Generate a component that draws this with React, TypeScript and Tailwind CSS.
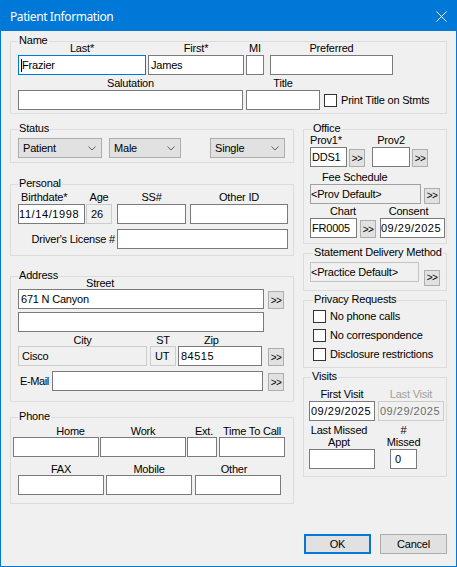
import React from "react";

type TBProps = { cls?: string; v?: string; kind?: "n" | "f" | "ro" | "sd" | "sl"; caret?: boolean; txt?: string };

function TB({ cls = "w-full", v = "", kind = "n", caret = false, txt = "pl-[2px]" }: TBProps) {
  const k =
    kind === "ro"
      ? "bg-[#f0f0f0] border-[#cccccc]"
      : kind === "f"
      ? "bg-white border-[#0078d7]"
      : kind === "sd"
      ? "bg-[#f0f0f0] border-[#a0a0a0]"
      : kind === "sl"
      ? "bg-[#f0f0f0] border-[#c4c4c4]"
      : "bg-white border-[#7a7a7a]";
  return (
    <div className={`h-[20px] shrink-0 border ${k} flex items-center overflow-hidden whitespace-nowrap ${txt} ${cls}`}>
      {caret && <span className="w-px h-[13px] bg-black shrink-0" />}
      {v}
    </div>
  );
}

function Field({ cls, label, lcls = "text-center", children }: { cls: string; label: React.ReactNode; lcls?: string; children: React.ReactNode }) {
  return (
    <div className={`flex flex-col shrink-0 ${cls}`}>
      <div className={`h-[13px] leading-[13px] whitespace-nowrap ${lcls}`}>{label}</div>
      {children}
    </div>
  );
}

function Btn({ cls = "", h = "h-[18px]" }: { cls?: string; h?: string }) {
  return (
    <div className={`w-[16px] ${h} shrink-0 bg-[#e1e1e1] border border-[#adadad] flex justify-center items-end pb-[2px] text-[10px] leading-[10px] tracking-[-0.5px] ${cls}`}>
      &gt;&gt;
    </div>
  );
}

function Sel({ cls, v }: { cls: string; v: string }) {
  return (
    <div className={`h-[20px] shrink-0 border border-[#adadad] bg-[#e1e1e1] flex items-center pl-[4px] pr-[5px] ${cls}`}>
      <span className="flex-1">{v}</span>
      <svg width="8" height="5" viewBox="0 0 8 5">
        <path d="M0.5 0.5L4 4L7.5 0.5" fill="none" stroke="#606060" strokeWidth="1" />
      </svg>
    </div>
  );
}

function Group({ title, cls = "", left = "left-[7px]", children }: { title: string; cls?: string; left?: string; children: React.ReactNode }) {
  return (
    <div className={`relative border border-[#dcdcdc] ${cls}`}>
      <span className={`absolute -top-[8px] ${left} px-[1px] bg-[#f0f0f0] leading-[13px] whitespace-nowrap`}>{title}</span>
      {children}
    </div>
  );
}

function Check({ label, cls = "" }: { label: string; cls?: string }) {
  return (
    <div className={`flex items-center ${cls}`}>
      <div className="w-[13px] h-[13px] border border-[#333333] bg-white shrink-0" />
      <span className="ml-[4px] whitespace-nowrap">{label}</span>
    </div>
  );
}

export default function App() {
  return (
    <div className="w-[457px] h-[567px] border border-[#0078d7] bg-[#f0f0f0] flex flex-col text-[11px] leading-[13px] tracking-[-0.2px] text-black font-['Liberation_Sans',Arial,sans-serif]">
      <div className="h-[30px] shrink-0 bg-[#0078d7] flex items-center pl-[9px] pr-[9px] text-white">
        <span className="flex-1 text-[12px] tracking-[-0.4px] font-['Noto_Sans',sans-serif]">Patient Information</span>
        <svg width="11" height="11" viewBox="0 0 11 11">
          <path d="M0.5 0.5L10.5 10.5M10.5 0.5L0.5 10.5" stroke="#ffffff" strokeWidth="1" />
        </svg>
      </div>

      <div className="flex-1 flex flex-col px-[9px] pt-[10px] pb-[12px]">
        <Group title="Name" cls="pb-[3px]">
          <div className="flex items-end pl-[7px]">
            <Field cls="w-[128px]" label="Last*">
              <TB kind="f" caret v="Frazier" />
            </Field>
            <Field cls="ml-[2px] w-[96px]" label="First*">
              <TB v="James" />
            </Field>
            <Field cls="ml-[2px] w-[18px]" label="MI">
              <TB />
            </Field>
            <Field cls="ml-[6px] w-[123px]" label="Preferred">
              <TB />
            </Field>
          </div>
          <div className="flex items-end pl-[7px] mt-[2px]">
            <Field cls="w-[225px]" label="Salutation">
              <TB />
            </Field>
            <Field cls="ml-[3px] w-[74px]" label="Title">
              <TB />
            </Field>
            <Check cls="ml-[4px] mb-[3px]" label="Print Title on Stmts" />
          </div>
        </Group>

        <div className="flex gap-[9px] mt-[15px]">
          <div className="w-[284px] shrink-0 flex flex-col">
            <Group title="Status" cls="pt-[8px] pb-[4px]">
              <div className="flex pl-[7px]">
                <Sel cls="w-[84px]" v="Patient" />
                <Sel cls="ml-[7px] w-[72px]" v="Male" />
                <Sel cls="ml-[29px] w-[75px]" v="Single" />
              </div>
            </Group>

            <Group title="Personal" cls="mt-[21px] pt-[6px] pb-[6px]">
              <div className="flex pl-[7px]">
                <Field cls="w-[67px]" label="Birthdate*" lcls="text-left pl-[3px]">
                  <TB v="11/14/1998" txt="pl-[0px] tracking-[0.6px]" />
                </Field>
                <Field cls="ml-[1px] w-[26px]" label="Age">
                  <TB kind="ro" v="26" txt="pl-[4px]" />
                </Field>
                <Field cls="ml-[5px] w-[69px]" label="SS#">
                  <TB />
                </Field>
                <Field cls="ml-[4px] w-[98px]" label="Other ID">
                  <TB />
                </Field>
              </div>
              <div className="flex items-center mt-[5px]">
                <div className="w-[104px] text-right whitespace-nowrap">Driver's License #</div>
                <TB cls="ml-[2px] w-[171px]" />
              </div>
            </Group>

            <Group title="Address" cls="mt-[20px] pb-[10px]">
              <div className="h-[12px] leading-[12px] pl-[75px]">Street</div>
              <div className="flex items-end pl-[7px]">
                <TB cls="w-[246px]" v="671 N Canyon" />
                <Btn cls="ml-[4px]" />
              </div>
              <div className="flex pl-[7px] mt-[3px]">
                <TB cls="w-[246px]" />
              </div>
              <div className="flex pl-[7px] mt-[2px] h-[12px] leading-[12px]">
                <div className="w-[129px] text-center">City</div>
                <div className="ml-[3px] w-[26px] text-center">ST</div>
                <div className="ml-[2px] w-[84px] pl-[26px]">Zip</div>
              </div>
              <div className="flex items-end pl-[7px]">
                <TB kind="ro" cls="w-[129px]" v="Cisco" txt="pl-[3px]" />
                <TB kind="ro" cls="ml-[3px] w-[26px]" v="UT" txt="pl-[4px]" />
                <TB cls="ml-[2px] w-[84px]" v="84515" txt="pl-[2px] tracking-[0.5px]" />
                <Btn cls="ml-[6px]" />
              </div>
              <div className="flex items-end mt-[5px]">
                <div className="w-[41px] pl-[9px] self-center whitespace-nowrap tracking-[-0.4px]">E-Mail</div>
                <TB cls="w-[211px]" />
                <Btn cls="ml-[5px]" />
              </div>
            </Group>

            <Group title="Phone" cls="mt-[15px] pt-[7px] pb-[8px]">
              <div className="flex pl-[2px] h-[12px] leading-[12px] whitespace-nowrap">
                <div className="w-[86px] pl-[29px] text-center">Home</div>
                <div className="ml-[1px] w-[86px] text-center">Work</div>
                <div className="ml-[1px] w-[30px] pl-[4px] text-center">Ext.</div>
                <div className="ml-[2px] w-[66px] text-center">Time To Call</div>
              </div>
              <div className="flex pl-[2px]">
                <TB cls="w-[86px]" />
                <TB cls="ml-[1px] w-[86px]" />
                <TB cls="ml-[1px] w-[30px]" />
                <TB cls="ml-[2px] w-[66px]" />
              </div>
              <div className="flex pl-[7px] mt-[6px] h-[12px] leading-[12px]">
                <div className="w-[86px] text-center">FAX</div>
                <div className="ml-[2px] w-[86px] text-center">Mobile</div>
                <div className="ml-[3px] w-[86px] pr-[8px] text-center">Other</div>
              </div>
              <div className="flex pl-[7px]">
                <TB cls="w-[86px]" />
                <TB cls="ml-[2px] w-[86px]" />
                <TB cls="ml-[3px] w-[86px]" />
              </div>
            </Group>
          </div>

          <div className="w-[144px] shrink-0 flex flex-col">
            <Group title="Office" cls="pt-[4px] pb-[5px]" left="left-[8px]">
              <div className="flex items-end pl-[6px]">
                <Field cls="w-[37px]" label="Prov1*" lcls="text-left">
                  <TB v="DDS1" txt="pl-[1px]" />
                </Field>
                <Btn cls="ml-[2px]" />
                <Field cls="ml-[7px] w-[38px]" label="Prov2">
                  <TB />
                </Field>
                <Btn cls="ml-[2px]" />
              </div>
              <div className="mt-[4px] h-[13px] pl-[18px] whitespace-nowrap">Fee Schedule</div>
              <div className="flex items-end pl-[6px]">
                <TB kind="sd" cls="w-[111px]" v="<Prov Default>" txt="pl-[0px]" />
                <Btn cls="ml-[3px]" h="h-[16px]" />
              </div>
              <div className="flex pl-[6px] mt-[1px]">
                <div className="w-[66px] flex flex-col">
                  <div className="h-[13px] text-center">Chart</div>
                  <div className="flex items-end">
                    <TB cls="w-[47px]" v="FR0005" txt="pl-[1px]" />
                    <Btn cls="ml-[3px]" />
                  </div>
                </div>
                <div className="ml-[4px] w-[65px] flex flex-col">
                  <div className="h-[13px] pr-[8px] text-center">Consent</div>
                  <TB v="09/29/2025" txt="pl-[0px] tracking-[0.5px]" />
                </div>
              </div>
            </Group>

            <Group title="Statement Delivery Method" cls="mt-[9px] pt-[8px] pb-[4px]" left="left-[9px]">
              <div className="flex items-start pl-[6px]">
                <TB kind="sl" cls="w-[109px]" v="<Practice Default>" txt="pl-[0px]" />
                <Btn cls="ml-[5px] mt-[8px]" h="h-[16px]" />
              </div>
            </Group>

            <Group title="Privacy Requests" cls="mt-[9px] pt-[9px] pb-[6px] pl-[9px]" left="left-[9px]">
              <div className="flex flex-col gap-[6px]">
                <Check label="No phone calls" />
                <Check label="No correspondence" />
                <Check label="Disclosure restrictions" />
              </div>
            </Group>

            <Group title="Visits" cls="mt-[9px] pt-[10px] pb-[7px]" left="left-[7px]">
              <div className="flex pl-[5px]">
                <Field cls="w-[66px]" label="First Visit">
                  <TB v="09/29/2025" txt="pl-[1px] tracking-[0.5px]" />
                </Field>
                <Field cls="ml-[3px] w-[66px]" label="Last Visit" lcls="text-center text-[#a0a0a0]">
                  <TB kind="ro" v="09/29/2025" txt="pl-[1px] tracking-[0.5px] text-[#6d6d6d]" />
                </Field>
              </div>
              <div className="flex pl-[5px] mt-[3px]">
                <div className="w-[66px] flex flex-col">
                  <div className="leading-[12px] text-center pr-[6px] whitespace-nowrap">
                    Last Missed
                    <br />
                    Appt
                  </div>
                  <TB cls="mt-[1px] w-full" />
                </div>
                <div className="ml-[15px] w-[27px] flex flex-col items-center">
                  <div className="leading-[12px] text-center whitespace-nowrap">
                    #
                    <br />
                    Missed
                  </div>
                  <TB cls="mt-[1px] w-[27px]" v="0" txt="pl-[4px]" />
                </div>
              </div>
            </Group>
          </div>
        </div>

        <div className="mt-auto flex justify-end gap-[9px]">
          <div className="w-[67px] h-[20px] border-2 border-[#0078d7] bg-[#e1e1e1] flex items-center justify-center">OK</div>
          <div className="w-[67px] h-[20px] border border-[#adadad] bg-[#e1e1e1] flex items-center justify-center">Cancel</div>
        </div>
      </div>
    </div>
  );
}
